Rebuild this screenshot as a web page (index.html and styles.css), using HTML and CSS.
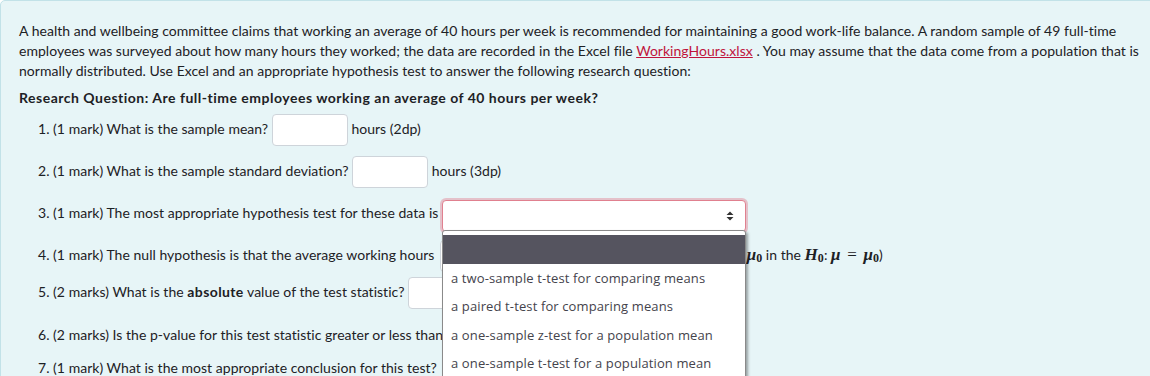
FILE: index.html
```html
<!DOCTYPE html>
<html lang="en">
<head>
  <meta charset="UTF-8" />
  <title>Hypothesis test question</title>
  <link rel="stylesheet" href="styles.css">
</head>
<body>
  <div class="formulation">
    <p class="intro">A health and wellbeing committee claims that working an average of 40 hours per week is recommended for maintaining a good work-life balance. A random sample of 49 full-time<br>employees was surveyed about how many hours they worked; the data are recorded in the Excel file <a href="#">WorkingHours.xlsx</a> . You may assume that the data come from a population that is<br>normally distributed. Use Excel and an appropriate hypothesis test to answer the following research question:</p>
    <p class="rq">Research Question: Are full-time employees working an average of 40 hours per week?</p>

    <div class="q q1">1. (1 mark) What is the sample mean? <span class="box"></span> hours (2dp)</div>
    <div class="q q2">2. (1 mark) What is the sample standard deviation? <span class="box"></span> hours (3dp)</div>
    <div class="q q3">3. (1 mark) The most appropriate hypothesis test for these data is <span class="select-wrap">
        <span class="select focused">
          <svg class="arrows" width="8" height="10" viewBox="0 0 8 10"><path d="M4 0.5 L7.5 4 H0.5 Z M4 9.5 L7.5 6 H0.5 Z" fill="#333"/></svg>
        </span>
        <!-- open options list of the select -->
        <ul class="dropdown">
          <li class="active">&nbsp;</li>
          <li>a two-sample t-test for comparing means</li>
          <li>a paired t-test for comparing means</li>
          <li>a one-sample z-test for a population mean</li>
          <li>a one-sample t-test for a population mean</li>
        </ul>
      </span></div>
    <div class="q q4">4. (1 mark) The null hypothesis is that the average working hours <span class="select short"></span> <span class="math">μ<sub>0</sub></span> in the <span class="math">H<sub>0</sub></span>: <span class="math">μ</span> <span class="eq">=</span> <span class="math">μ<sub>0</sub></span>)</div>
    <div class="q q5">5. (2 marks) What is the <b>absolute</b> value of the test statistic? <span class="box"></span></div>
    <div class="q q6">6. (2 marks) Is the p-value for this test statistic greater or less than <span class="select short"></span></div>
    <div class="q q7">7. (1 mark) What is the most appropriate conclusion for this test? <span class="select short"></span></div>
  </div>
</body>
</html>
```

FILE: styles.css
```css
html, body {
  margin: 0;
  overflow: hidden;
}
body {
  font-family: Lato, "Open Sans", sans-serif;
  font-size: 14px;
  letter-spacing: 0.03px;
  color: #1d2125;
  background: #fff;
}
.formulation {
  width: 1200px;
  height: 420px;
  background-color: #e7f5f7;
  border: 1px solid #c2e2e8;
  border-radius: 5px;
  padding: 20px 18px 0 18px;
}
p {
  margin: 0;
  line-height: 20px;
}
.intro a {
  color: #c0143c;
  text-decoration: underline;
}
.rq {
  font-weight: bold;
  letter-spacing: 0.5px;
  margin-top: 7px;
  margin-bottom: 5px;
}
b {
  letter-spacing: 0.4px;
}
.q {
  margin-left: 19px;
  height: 32px;
  line-height: 32px;
  margin-bottom: 10px;
  white-space: nowrap;
}
.q4 { margin-bottom: 5px; }
.q5 { margin-bottom: 11px; }
.q6 { margin-bottom: 1px; }
.box {
  display: inline-block;
  vertical-align: middle;
  width: 74px;
  height: 30px;
  background: #fff;
  border: 1px solid #ced4da;
  border-radius: 4px;
}
.select-wrap {
  position: relative;
  display: inline-block;
  vertical-align: middle;
  height: 32px;
}
.select {
  position: relative;
  display: inline-block;
  vertical-align: middle;
  width: 302px;
  height: 30px;
  background: #fff;
  border: 1px solid #ced4da;
  border-radius: 4px;
}
.select.short {
  width: 301px;
  margin-left: 2px;
}
.q6 .select.short {
  width: 294px;
}
.select.focused {
  border-color: #e0808f;
  box-shadow: 0 0 0 2px rgba(225, 150, 165, 0.55);
}
.arrows {
  position: absolute;
  right: 11px;
  top: 10px;
}
.dropdown {
  position: absolute;
  left: 0;
  top: 32px;
  width: 302px;
  margin: 0;
  padding: 4px 0 0 0;
  list-style: none;
  background: #fff;
  border: 1px solid #8a8a8a;
  border-radius: 3px 3px 0 0;
  box-shadow: 2px 2px 3px rgba(0, 0, 0, 0.35);
  font-family: "Open Sans", sans-serif;
  font-size: 13px;
  letter-spacing: 0.12px;
  color: #44434c;
  z-index: 5;
  height: 160px;
}
.dropdown li {
  height: 28.5px;
  line-height: 28px;
  padding-left: 8px;
}
.dropdown li.active {
  background: #55545f;
}
.math {
  font-family: "Liberation Serif", serif;
  font-weight: bold;
  font-style: italic;
  font-size: 17px;
}
.math sub {
  font-style: normal;
  font-size: 12px;
  vertical-align: -2px;
}
.eq {
  font-family: "Liberation Serif", serif;
  font-size: 17px;
  padding: 0 3px;
}
```
